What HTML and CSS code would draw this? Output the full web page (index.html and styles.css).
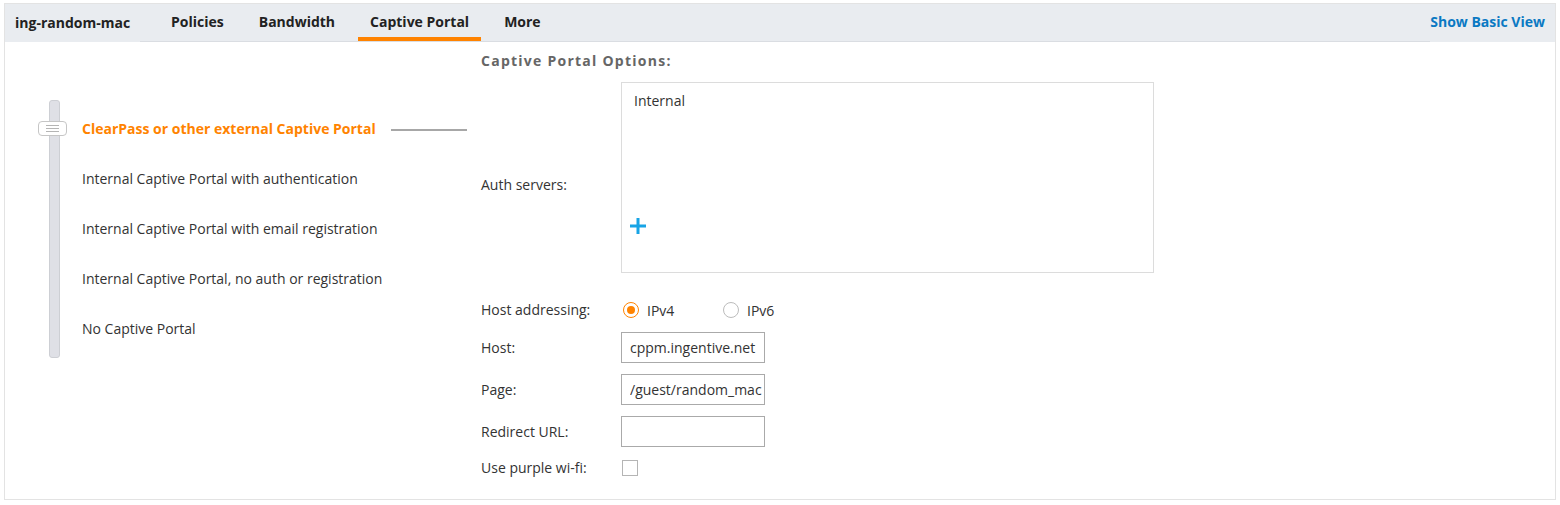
FILE: index.html
```html
<!DOCTYPE html>
<html lang="en">
<head>
    <meta charset="UTF-8">
    <title>Network - Captive Portal</title>
    <link rel="stylesheet" href="styles.css">
</head>
<body>
    <div class="panel">
        <div class="panel-header">
            <div class="network-name">ing-random-mac</div>
            <ul class="tab-strip">
                <li class="tab">Policies</li>
                <li class="tab">Bandwidth</li>
                <li class="tab active">Captive Portal</li>
                <li class="tab">More</li>
            </ul>
            <a href="#" class="view-link">Show Basic View</a>
        </div>

        <div class="panel-body">
            <div class="portal-picker">
                <div class="slider">
                    <div class="slider-track"></div>
                    <div class="slider-handle"><span></span><span></span><span></span></div>
                </div>
                <ul class="portal-options">
                    <li class="selected">ClearPass or other external Captive Portal<span class="connector"></span></li>
                    <li>Internal Captive Portal with authentication</li>
                    <li>Internal Captive Portal with email registration</li>
                    <li>Internal Captive Portal, no auth or registration</li>
                    <li>No Captive Portal</li>
                </ul>
            </div>

            <div class="portal-form">
                <h3 class="section-title">Captive Portal Options:</h3>

                <div class="form-row auth-row">
                    <label>Auth servers:</label>
                    <div class="server-list">
                        <div class="server">Internal</div>
                        <button type="button" class="add-server">
                            <svg width="18" height="18" viewBox="0 0 18 18"><path d="M9 1v16M1 9h16" stroke="#17a4e6" stroke-width="3" fill="none"/></svg>
                        </button>
                    </div>
                </div>

                <div class="form-row radio-row">
                    <label>Host addressing:</label>
                    <div class="radio-group">
                        <label class="radio"><input type="radio" name="addr" checked> IPv4</label>
                        <label class="radio"><input type="radio" name="addr"> IPv6</label>
                    </div>
                </div>

                <div class="form-row">
                    <label>Host:</label>
                    <input type="text" class="text-input" value="cppm.ingentive.net">
                </div>

                <div class="form-row">
                    <label>Page:</label>
                    <input type="text" class="text-input page-input" value="/guest/random_mac">
                </div>

                <div class="form-row">
                    <label>Redirect URL:</label>
                    <input type="text" class="text-input" value="">
                </div>

                <div class="form-row check-row">
                    <label>Use purple wi-fi:</label>
                    <input type="checkbox" class="check">
                </div>
            </div>
        </div>
    </div>
</body>
</html>
```

FILE: styles.css
```css
* {
    margin: 0;
    padding: 0;
    box-sizing: border-box;
}

body {
    font-family: 'Open Sans', 'Liberation Sans', sans-serif;
    font-size: 14px;
    color: #333;
    background: #fff;
}

.panel {
    margin: 3px 4px 0 4px;
    height: 497px;
    border: 1px solid #e3e3e3;
}

.panel-header {
    display: flex;
    align-items: stretch;
    height: 38px;
    background: #e9ecf0;
}

.network-name {
    width: 135px;
    padding-left: 10px;
    line-height: 38px;
    font-weight: 700;
    color: #222;
}

.tab-strip {
    flex: 1;
    display: flex;
    list-style: none;
    padding-left: 19px;
    border-bottom: 1px solid #dadde2;
}

.tab {
    padding: 0 12px;
    margin-right: 11px;
    line-height: 36px;
    font-weight: 700;
    color: #222;
    border-bottom: 4px solid transparent;
    cursor: pointer;
}

.tab.active {
    border-bottom-color: #ff8300;
}

.view-link {
    padding: 0 10px 0 0;
    line-height: 36px;
    font-weight: 700;
    color: #0b79c3;
    text-decoration: none;
}

.panel-body {
    display: flex;
}

/* left side: portal type slider */
.portal-picker {
    display: flex;
    width: 476px;
    padding: 58px 0 0 33px;
}

.slider {
    position: relative;
    width: 29px;
    height: 258px;
}

.slider-track {
    margin-left: 11px;
    width: 11px;
    height: 100%;
    background: #dfe0e6;
    border: 1px solid #cdcfd4;
    border-radius: 3px;
}

.slider-handle {
    position: absolute;
    top: 21px;
    left: 0;
    width: 29px;
    height: 15px;
    background: #fff;
    border: 1px solid #c6c6c6;
    border-radius: 4px;
    display: flex;
    flex-direction: column;
    justify-content: center;
    align-items: center;
    gap: 2px;
}

.slider-handle span {
    display: block;
    width: 13px;
    height: 1px;
    background: #b5b5b5;
}

.portal-options {
    list-style: none;
    padding: 3px 0 0 15px;
}

.portal-options li {
    height: 50px;
    display: flex;
    align-items: center;
    cursor: pointer;
}

.portal-options li.selected {
    color: #ff8300;
    font-weight: 700;
}

.connector {
    display: inline-block;
    width: 76px;
    height: 2px;
    margin: 3px 0 0 15px;
    background: #a7a7a7;
}

/* right side: options form */
.portal-form {
    padding-top: 10px;
    flex: 1;
}

.section-title {
    font-size: 14px;
    font-weight: 700;
    letter-spacing: 1.25px;
    color: #666;
    line-height: 18px;
    margin-bottom: 12px;
}

.form-row {
    display: flex;
    align-items: center;
    margin-bottom: 11px;
}

.form-row > label {
    width: 140px;
    line-height: 20px;
}

.auth-row {
    align-items: flex-start;
    margin-bottom: 26px;
}

.auth-row > label {
    padding-top: 93px;
}

.server-list {
    position: relative;
    width: 533px;
    height: 191px;
    border: 1px solid #dcdcdc;
    padding: 8px 12px;
}

.server {
    line-height: 20px;
}

.add-server {
    position: absolute;
    left: 7px;
    top: 134px;
    background: none;
    border: none;
    cursor: pointer;
    display: flex;
}

.radio-row {
    height: 22px;
}

.radio-group {
    display: flex;
}

.radio {
    display: flex;
    align-items: center;
    width: 100px;
    padding-left: 2px;
    cursor: pointer;
}

.radio input {
    appearance: none;
    width: 16px;
    height: 16px;
    border: 1px solid #bcbcbc;
    border-radius: 50%;
    margin-right: 8px;
    display: grid;
    place-items: center;
    background: #fff;
}

.radio input:checked {
    border-color: #ff8300;
}

.radio input:checked::after {
    content: '';
    width: 8px;
    height: 8px;
    border-radius: 50%;
    background: #ff8300;
}

.text-input {
    width: 144px;
    height: 31px;
    border: 1px solid #aaa;
    padding: 0 8px;
    font-family: inherit;
    font-size: 14px;
    color: #333;
    outline: none;
}

.page-input {
    padding: 0 1px 0 8px;
}

.check-row {
    height: 20px;
}

.check {
    appearance: none;
    width: 16px;
    height: 16px;
    margin-left: 1px;
    border: 1px solid #b5b5b5;
    background: #fff;
}
```
